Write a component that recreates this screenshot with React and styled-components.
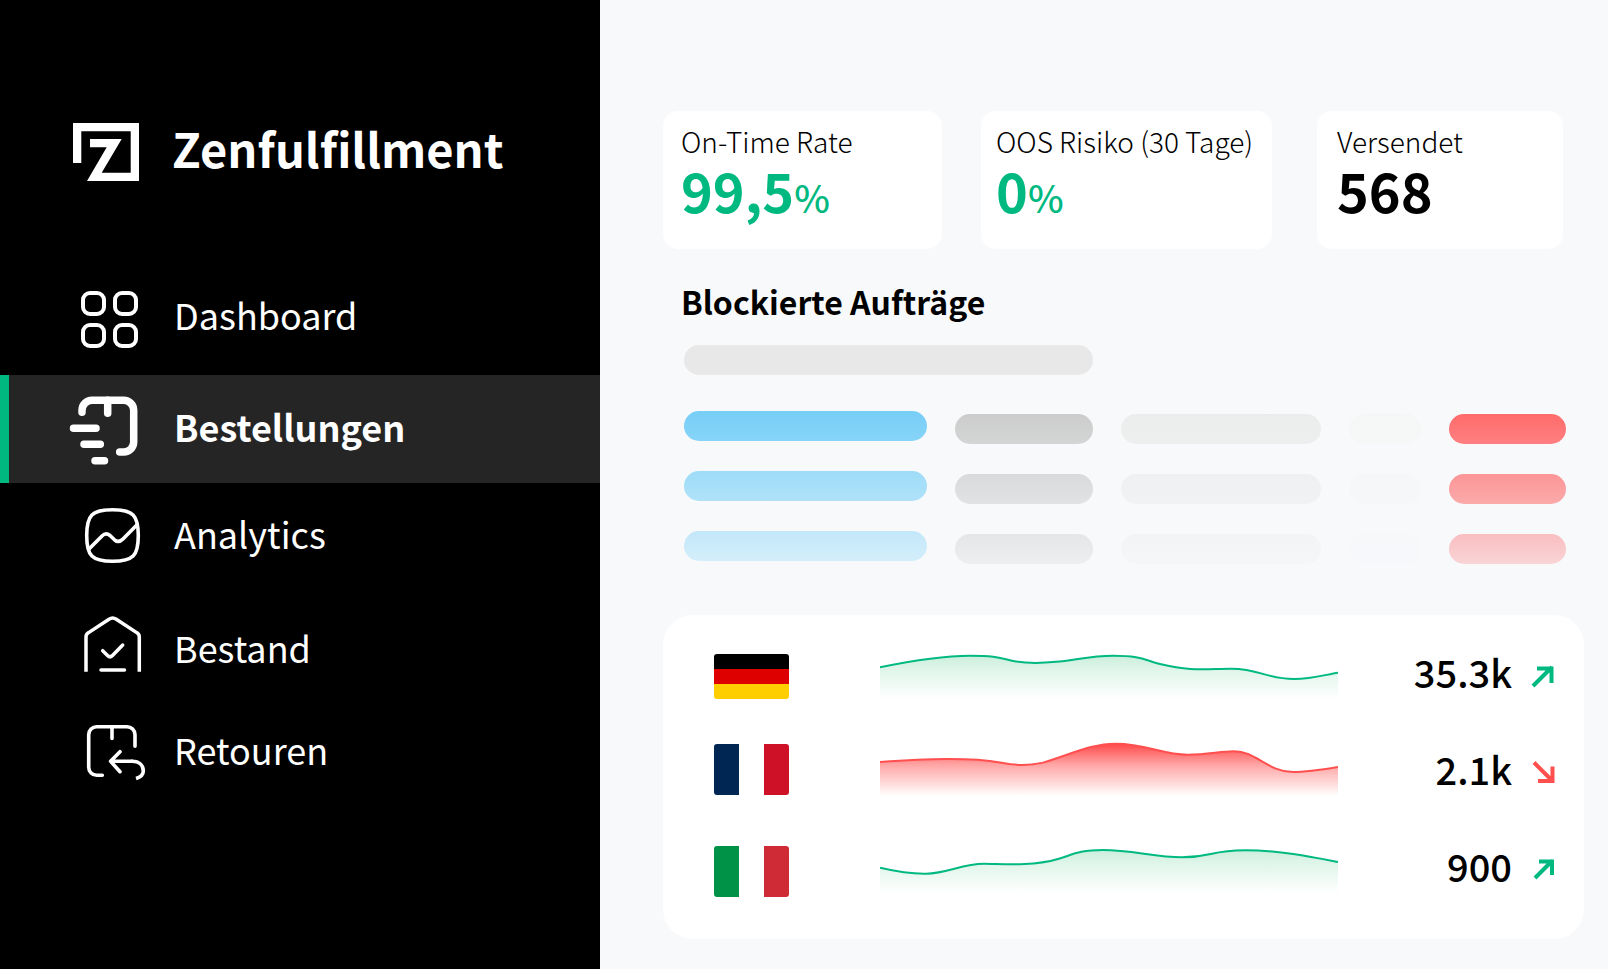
import React from 'react';
import styled, { createGlobalStyle } from 'styled-components';

const GlobalStyle = createGlobalStyle`
    * {
        box-sizing: border-box;
    }
    body {
        margin: 0;
        font-family: 'Noto Sans CJK SC', 'Source Sans Pro', sans-serif;
        background: #f8f9fb;
        color: #000;
    }
`;

const Page = styled.div`
    display: flex;
    min-height: 100vh;
`;

const Sidebar = styled.aside`
    flex: 0 0 600px;
    padding-top: 119px;
    background: #000;
    color: #fff;
`;

const Brand = styled.div`
    display: flex;
    align-items: flex-end;
    gap: 33px;
    padding-left: 73px;
    margin-bottom: 78px;
`;

const BrandName = styled.span`
    padding-bottom: 4px;
    font-size: 47px;
    font-weight: 700;
    line-height: 58px;
`;

const Nav = styled.nav`
    display: grid;
    grid-template-rows: 116px 108px 106px 122px 82px;
`;

const NavLink = styled.a`
    display: flex;
    align-items: center;
    gap: 28px;
    padding: 0 0 4px 57px;
    border-left: 9px solid ${props => props.$active ? '#00b980' : 'transparent'};
    background: ${props => props.$active ? '#252525' : 'none'};
    color: #fff;
    font-size: 36px;
    font-weight: ${props => props.$active ? 700 : 400};
    line-height: 52px;
    text-decoration: none;
`;

const NavText = styled.span`
    padding-bottom: 2px;
`;

const NavIcon = styled.svg`
    flex: none;
    width: 80px;
    height: 80px;
    fill: none;
    stroke: #fff;
    stroke-width: ${props => props.$stroke};
    stroke-linecap: round;
    stroke-linejoin: round;
`;

const Main = styled.main`
    flex: 1;
    min-width: 0;
    padding: 111px 24px 30px 63px;
`;

const Stats = styled.section`
    display: grid;
    grid-template-columns: 279fr 39fr 291fr 45fr 246fr;
    padding-right: 21px;
`;

const StatCard = styled.article`
    grid-column: ${props => props.$column};
    padding: 10px 0 30px ${props => props.$inset}px;
    border-radius: 15px;
    background: #fff;
    white-space: nowrap;
`;

const StatLabel = styled.div`
    font-size: 28px;
    font-weight: 300;
    line-height: 40px;
`;

const StatValue = styled.div`
    color: ${props => props.$good ? '#00b980' : '#000'};
    font-size: 54px;
    font-weight: 700;
    line-height: 58px;
`;

const Unit = styled.span`
    font-size: 38px;
    font-weight: 500;
    line-height: 38px;
`;

const Orders = styled.section`
    padding: 28px 18px 51px 21px;
`;

const Heading = styled.h2`
    margin: 0 0 20px -3px;
    font-size: 32px;
    font-weight: 700;
    line-height: 48px;
`;

const Bar = styled.div`
    height: 30px;
    border-radius: 15px;
    background: linear-gradient(${props => props.$from}, ${props => props.$to});
`;

const TitleBar = styled(Bar)`
    grid-column: 1 / 3;
    margin-bottom: 36px;
`;

const BarGrid = styled.div`
    display: grid;
    grid-template-columns: 243fr 138fr 201fr 72fr 117fr;
    column-gap: 28px;
    align-items: end;
`;

const BarColumn = styled.div`
    display: grid;
    grid-row: 2;
    row-gap: 30px;
    padding-bottom: ${props => props.$raised ? '3px' : '0'};
`;

const Countries = styled.section`
    padding: 8px 28px 25px 51px;
    border-radius: 30px;
    background: #fff;
`;

const CountryRow = styled.div`
    display: flex;
    align-items: center;
    height: 97px;
`;

const Flag = styled.svg`
    flex: none;
    width: 75px;
    height: 65px;
    margin-right: 91px;
`;

const Chart = styled.svg`
    flex: 1;
    min-width: 0;
    height: 97px;
`;

const Amount = styled.span`
    width: 174px;
    font-size: 38px;
    font-weight: 500;
    line-height: 52px;
    text-align: right;
`;

const Arrow = styled.svg`
    flex: none;
    width: 28px;
    height: 32px;
    margin-left: 16px;
    fill: none;
    stroke-width: 4;
`;

const navItems = [
    {
        title: 'Dashboard',
        stroke: 4,
        icon: (
            <>
                <rect x="17" y="18" width="21" height="21" rx="7" />
                <rect x="49" y="18" width="21" height="21" rx="7" />
                <rect x="17" y="50" width="21" height="21" rx="7" />
                <rect x="49" y="50" width="21" height="21" rx="7" />
            </>
        ),
    },
    {
        title: 'Bestellungen',
        stroke: 7.5,
        active: true,
        icon: (
            <>
                <path d="M16 25.3V23.3A10 10 0 0 1 26 13.3H57.7A10 10 0 0 1 67.7 23.3V55A10 10 0 0 1 57.7 65H53.7" />
                <path d="M41.7 13.3V26.3" />
                <path d="M7.5 41.3H30M18 57.3H34.3M29 73.7H38.5" />
            </>
        ),
    },
    {
        title: 'Analytics',
        stroke: 3.6,
        icon: (
            <>
                <path d="M46.5 15.7C67 15.7 72.3 21 72.3 41.5S67 67.3 46.5 67.3S20.7 62 20.7 41.5S26 15.7 46.5 15.7Z" />
                <path d="M23 55L36 42C38.5 39.5 41 39 44 41.5L48.5 45.8C51.5 48.5 54 48 57 45L71.3 30.5" />
            </>
        ),
    },
    {
        title: 'Bestand',
        stroke: 3.5,
        icon: (
            <>
                <path strokeLinecap="butt" d="M20 63.7V29C20 27 21 25.6 22.6 24.6L43 11.2C45.3 9.7 48 9.7 50.3 11.2L70.7 24.6C72.3 25.6 73.3 27 73.3 29V63.7" />
                <path d="M36.7 42.7L42 47.9C43.3 49.1 44.7 49.1 46 47.9L56.7 37" />
                <path d="M35 62H58.5" />
            </>
        ),
    },
    {
        title: 'Retouren',
        stroke: 3.6,
        icon: (
            <>
                <path d="M36.3 65.3H30.7A8 8 0 0 1 22.7 57.3V24.7A8 8 0 0 1 30.7 16.7H61A8 8 0 0 1 69 24.7V36.3" />
                <path d="M46 16.7V28.5" />
                <path d="M54 41.7L44.6 51.3L54 61.7M44.6 51.3H66" />
                <path strokeLinecap="butt" d="M65 51.3H66C74 51.3 77.3 56 77.3 61C77.3 64 74.8 67 70 68.4" />
            </>
        ),
    },
];

const stats = [
    { label: 'On-Time Rate', value: '99,5', unit: '%', good: true, column: 1, inset: 18 },
    { label: 'OOS Risiko (30 Tage)', value: '0', unit: '%', good: true, column: 3, inset: 15 },
    { label: 'Versendet', value: '568', column: 5, inset: 20 },
];

const barColumns = [
    [['#77cef7', '#87d4f8'], ['#9edcf8', '#afe2f9'], ['#c2e7fa', '#d4eefa']],
    [['#cccccc', '#d4d5d5'], ['#d9dadc', '#e1e2e4'], ['#e5e6e8', '#edeef0']],
    [['#ebecec', '#edeeee'], ['#eff0f1', '#f1f2f4'], ['#f3f4f6', '#f5f6f8']],
    [['#f5f6f6', '#f6f7f7'], ['#f6f7f9', '#f6f7f9'], ['#f7f8fa', '#f7f8fb']],
    [['#ff6b6b', '#fe8081'], ['#fc9596', '#fbaaab'], ['#f9bec0', '#f9d4d6']],
];

const countries = [
    {
        code: 'de',
        name: 'Deutschland',
        amount: '35.3k',
        color: '#00b980',
        fill: '#22b96a',
        fade: 0.3,
        line: 'M0 44.3C30 38 62 32.7 90 32.7C116 32.7 120 35 131 37.5C142 40 160 40.5 176 38.8C195 37 212 32.7 233 32.7C262 32.7 264 37 280 41C310 48.5 325 46 350 45.7C380 45.3 385 56 414 56C432 56 446 51.5 458 49.7',
        arrow: 'M5 30L24 11M9 12.5H23.5V27',
        flag: (
            <>
                <path d="M0 30V18A3 3 0 0 1 3 15H72A3 3 0 0 1 75 18V30Z" fill="#000" />
                <rect y="30" width="75" height="15" fill="#de0000" />
                <path d="M0 45H75V57A3 3 0 0 1 72 60H3A3 3 0 0 1 0 57Z" fill="#ffce00" />
            </>
        ),
    },
    {
        code: 'fr',
        name: 'Frankreich',
        amount: '2.1k',
        color: '#ff4f4f',
        fill: '#ff4b4b',
        fade: 1,
        line: 'M0 42C22 40.5 44 39.2 66 39.1C88 39 106 40 120 42.5C130 44.6 144 47 163 42.6C190 35 210 23.7 236 23.7C266 23.7 282 34.7 308 34.7C328 34.7 340 31.2 354 31.2C376 31.2 388 52 413 52C428 52 443 49.5 458 47',
        arrow: 'M6 9.5L25 28.5M10 28H24.5V13.5',
        flag: (
            <>
                <path d="M25 8H3A3 3 0 0 0 0 11V56A3 3 0 0 0 3 59H25Z" fill="#002654" />
                <path d="M50 8H72A3 3 0 0 1 75 11V56A3 3 0 0 1 72 59H50Z" fill="#ce1126" />
            </>
        ),
    },
    {
        code: 'it',
        name: 'Italien',
        amount: '900',
        color: '#00b980',
        fill: '#22b96a',
        fade: 0.3,
        line: 'M0 50.7C14 54 30 57 46 56.7C68 56.2 82 46.7 104 46.7C120 46.7 150 50 178 42C192 38 198 33 223 33C252 33 275 40.3 302 40.3C332 40.3 330 33.2 365 33.2C400 33.2 435 40.5 458 45',
        arrow: 'M7 28L24.5 10.5M11 11.5H24V25',
        flag: (
            <>
                <path d="M25 13H3A3 3 0 0 0 0 16V61A3 3 0 0 0 3 64H25Z" fill="#009246" />
                <path d="M50 13H72A3 3 0 0 1 75 16V61A3 3 0 0 1 72 64H50Z" fill="#ce2b37" />
            </>
        ),
    },
];

const Sparkline = ({ code, color, fill, fade, line }) => (
    <Chart viewBox="0 0 458 97" preserveAspectRatio="none" aria-hidden="true">
        <defs>
            <linearGradient id={`fade-${code}`} gradientUnits="userSpaceOnUse" x1="0" y1="24" x2="0" y2="76">
                <stop offset="0" stopColor={fill} stopOpacity={fade} />
                <stop offset="0.4" stopColor={fill} stopOpacity={fade / 2} />
                <stop offset="1" stopColor={fill} stopOpacity="0" />
            </linearGradient>
        </defs>
        <path d={`${line}V80H0Z`} fill={`url(#fade-${code})`} />
        <path d={line} fill="none" stroke={color} strokeWidth="2" />
    </Chart>
);

const App = () => (
    <>
        <GlobalStyle />
        <Page>
            <Sidebar>
                <Brand>
                    <svg width="66" height="58" viewBox="0 0 66 58" aria-hidden="true">
                        <path fill="#fff" d="M0 0H66V58H14L33.7 24.3H17V16H48.7L28.7 49.7H57.7V8.3H8.3V40H0Z" />
                    </svg>
                    <BrandName>Zenfulfillment</BrandName>
                </Brand>
                <Nav>
                    {navItems.map(item => (
                        <NavLink href="#" key={item.title} $active={item.active}>
                            <NavIcon viewBox="0 0 80 80" $stroke={item.stroke} aria-hidden="true">{item.icon}</NavIcon>
                            <NavText>{item.title}</NavText>
                        </NavLink>
                    ))}
                </Nav>
            </Sidebar>
            <Main>
                <Stats>
                    {stats.map(stat => (
                        <StatCard key={stat.label} $column={stat.column} $inset={stat.inset}>
                            <StatLabel>{stat.label}</StatLabel>
                            <StatValue $good={stat.good}>
                                {stat.value}
                                {stat.unit && <Unit>{stat.unit}</Unit>}
                            </StatValue>
                        </StatCard>
                    ))}
                </Stats>
                <Orders>
                    <Heading>Blockierte Aufträge</Heading>
                    <BarGrid>
                        <TitleBar $from="#e8e8e8" $to="#e8e8e8" />
                        {barColumns.map((bars, i) => (
                            <BarColumn key={i} $raised={i === 0}>
                                {bars.map(([from, to]) => <Bar key={from} $from={from} $to={to} />)}
                            </BarColumn>
                        ))}
                    </BarGrid>
                </Orders>
                <Countries>
                    {countries.map(country => (
                        <CountryRow key={country.code}>
                            <Flag viewBox="0 0 75 65" role="img" aria-label={country.name}>{country.flag}</Flag>
                            <Sparkline {...country} />
                            <Amount>{country.amount}</Amount>
                            <Arrow viewBox="0 0 28 32" stroke={country.color} aria-hidden="true">
                                <path d={country.arrow} />
                            </Arrow>
                        </CountryRow>
                    ))}
                </Countries>
            </Main>
        </Page>
    </>
);

export default App;
